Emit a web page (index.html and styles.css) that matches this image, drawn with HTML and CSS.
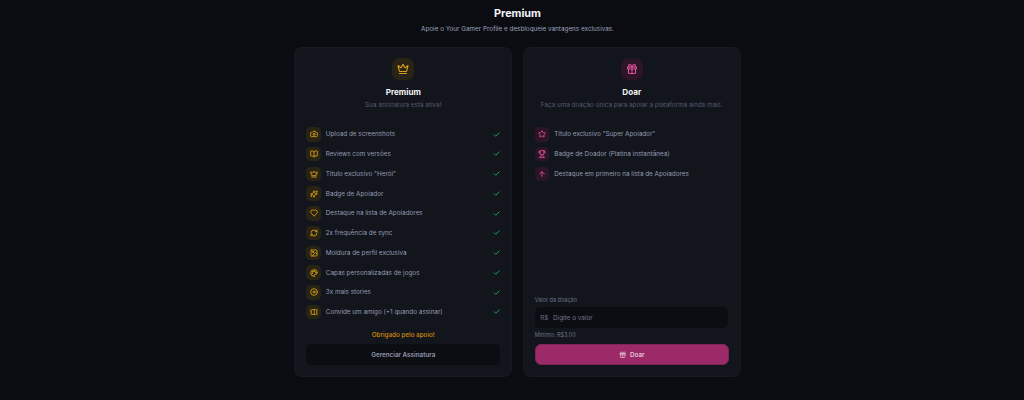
FILE: index.html
```html
<!DOCTYPE html>
<html lang="pt-BR">
<head>
  <meta charset="UTF-8">
  <title>Premium</title>
  <link rel="stylesheet" href="styles.css">
</head>
<body>
  <svg class="sprite" aria-hidden="true">
    <symbol id="i-crown" viewBox="0 0 24 24"><path d="M11.562 3.266a.5.5 0 0 1 .876 0L15.39 8.87a1 1 0 0 0 1.516.294L21.183 5.5a.5.5 0 0 1 .798.519l-2.834 10.246a1 1 0 0 1-.956.734H5.81a1 1 0 0 1-.957-.734L2.02 6.02a.5.5 0 0 1 .798-.519l4.276 3.664a1 1 0 0 0 1.516-.294z"/><path d="M5 21h14"/></symbol>
    <symbol id="i-camera" viewBox="0 0 24 24"><path d="M14.5 4h-5L7 7H4a2 2 0 0 0-2 2v9a2 2 0 0 0 2 2h16a2 2 0 0 0 2-2V9a2 2 0 0 0-2-2h-3l-2.5-3z"/><circle cx="12" cy="13" r="3"/></symbol>
    <symbol id="i-book" viewBox="0 0 24 24"><path d="M12 7v14"/><path d="M3 18a1 1 0 0 1-1-1V4a1 1 0 0 1 1-1h5a4 4 0 0 1 4 4 4 4 0 0 1 4-4h5a1 1 0 0 1 1 1v13a1 1 0 0 1-1 1h-6a3 3 0 0 0-3 3 3 3 0 0 0-3-3z"/></symbol>
    <symbol id="i-sparkles" viewBox="0 0 24 24"><path d="M9.937 15.5A2 2 0 0 0 8.5 14.063l-6.135-1.582a.5.5 0 0 1 0-.962L8.5 9.936A2 2 0 0 0 9.937 8.5l1.582-6.135a.5.5 0 0 1 .963 0L14.063 8.5A2 2 0 0 0 15.5 9.937l6.135 1.581a.5.5 0 0 1 0 .964L15.5 14.063a2 2 0 0 0-1.437 1.437l-1.582 6.135a.5.5 0 0 1-.963 0z"/><path d="M20 3v4"/><path d="M22 5h-4"/><path d="M4 17v2"/><path d="M5 18H3"/></symbol>
    <symbol id="i-heart" viewBox="0 0 24 24"><path d="M19 14c1.49-1.46 3-3.21 3-5.5A5.5 5.5 0 0 0 16.5 3c-1.76 0-3 .5-4.5 2-1.5-1.5-2.74-2-4.5-2A5.5 5.5 0 0 0 2 8.5c0 2.3 1.5 4.05 3 5.5l7 7Z"/></symbol>
    <symbol id="i-refresh" viewBox="0 0 24 24"><path d="M3 12a9 9 0 0 1 9-9 9.75 9.75 0 0 1 6.74 2.74L21 8"/><path d="M21 3v5h-5"/><path d="M21 12a9 9 0 0 1-9 9 9.75 9.75 0 0 1-6.74-2.74L3 16"/><path d="M8 16H3v5"/></symbol>
    <symbol id="i-image" viewBox="0 0 24 24"><rect x="3" y="3" width="18" height="18" rx="2"/><circle cx="9" cy="9" r="2"/><path d="m21 15-3.086-3.086a2 2 0 0 0-2.828 0L6 21"/></symbol>
    <symbol id="i-palette" viewBox="0 0 24 24"><path d="M12 22a1 1 0 0 1 0-20 10 9 0 0 1 10 9 5 5 0 0 1-5 5h-2.25a1.75 1.75 0 0 0-1.4 2.8l.3.4a1.75 1.75 0 0 1-1.4 2.8z"/><circle cx="13.5" cy="6.5" r="1"/><circle cx="17.5" cy="10.5" r="1"/><circle cx="6.5" cy="12.5" r="1"/><circle cx="8.5" cy="7.5" r="1"/></symbol>
    <symbol id="i-dot" viewBox="0 0 24 24"><circle cx="12" cy="12" r="10"/><circle cx="12" cy="12" r="3"/></symbol>
    <symbol id="i-ticket" viewBox="0 0 24 24"><path d="M2 9a3 3 0 0 1 0 6v2a2 2 0 0 0 2 2h16a2 2 0 0 0 2-2v-2a3 3 0 0 1 0-6V7a2 2 0 0 0-2-2H4a2 2 0 0 0-2 2Z"/><path d="M13 5v2"/><path d="M13 17v2"/><path d="M13 11v2"/></symbol>
    <symbol id="i-star" viewBox="0 0 24 24"><path d="M11.525 2.295a.53.53 0 0 1 .95 0l2.31 4.679a2.123 2.123 0 0 0 1.595 1.16l5.166.756a.53.53 0 0 1 .294.904l-3.736 3.638a2.123 2.123 0 0 0-.611 1.878l.882 5.14a.53.53 0 0 1-.771.56l-4.618-2.428a2.122 2.122 0 0 0-1.973 0L6.396 21.01a.53.53 0 0 1-.77-.56l.881-5.139a2.122 2.122 0 0 0-.611-1.879L2.16 9.795a.53.53 0 0 1 .294-.906l5.165-.755a2.122 2.122 0 0 0 1.597-1.16z"/></symbol>
    <symbol id="i-trophy" viewBox="0 0 24 24"><path d="M6 9H4.5a2.5 2.5 0 0 1 0-5H6"/><path d="M18 9h1.5a2.5 2.5 0 0 0 0-5H18"/><path d="M4 22h16"/><path d="M10 14.66V17c0 .55-.47.98-.97 1.21C7.85 18.75 7 20.24 7 22"/><path d="M14 14.66V17c0 .55.47.98.97 1.21C16.15 18.75 17 20.24 17 22"/><path d="M18 2H6v7a6 6 0 0 0 12 0V2Z"/></symbol>
    <symbol id="i-arrow" viewBox="0 0 24 24"><path d="m5 12 7-7 7 7"/><path d="M12 19V5"/></symbol>
    <symbol id="i-gift" viewBox="0 0 24 24"><rect x="3" y="8" width="18" height="4" rx="1"/><path d="M12 8v13"/><path d="M19 12v7a2 2 0 0 1-2 2H7a2 2 0 0 1-2-2v-7"/><path d="M7.5 8a2.5 2.5 0 0 1 0-5A4.8 8 0 0 1 12 8a4.8 8 0 0 1 4.5-5 2.5 2.5 0 0 1 0 5"/></symbol>
    <symbol id="i-check" viewBox="0 0 24 24"><path d="M20 6 9 17l-5-5"/></symbol>
  </svg>

  <main class="page">
    <h1 class="page-title">Premium</h1>
    <p class="page-sub">Apoie o Your Gamer Profile e desbloqueie vantagens exclusivas.</p>

    <div class="plans">
      <section class="card card-gold">
        <header class="card-head">
          <div class="head-icon"><svg class="ico"><use href="#i-crown"/></svg></div>
          <h2>Premium</h2>
          <p>Sua assinatura está ativa!</p>
        </header>
        <ul class="perks">
          <li><span class="perk-icon"><svg class="ico"><use href="#i-camera"/></svg></span><span class="perk-text">Upload de screenshots</span><svg class="ico tick"><use href="#i-check"/></svg></li>
          <li><span class="perk-icon"><svg class="ico"><use href="#i-book"/></svg></span><span class="perk-text">Reviews com versões</span><svg class="ico tick"><use href="#i-check"/></svg></li>
          <li><span class="perk-icon"><svg class="ico"><use href="#i-crown"/></svg></span><span class="perk-text">Título exclusivo "Herói"</span><svg class="ico tick"><use href="#i-check"/></svg></li>
          <li><span class="perk-icon"><svg class="ico"><use href="#i-sparkles"/></svg></span><span class="perk-text">Badge de Apoiador</span><svg class="ico tick"><use href="#i-check"/></svg></li>
          <li><span class="perk-icon"><svg class="ico"><use href="#i-heart"/></svg></span><span class="perk-text">Destaque na lista de Apoiadores</span><svg class="ico tick"><use href="#i-check"/></svg></li>
          <li><span class="perk-icon"><svg class="ico"><use href="#i-refresh"/></svg></span><span class="perk-text">2x frequência de sync</span><svg class="ico tick"><use href="#i-check"/></svg></li>
          <li><span class="perk-icon"><svg class="ico"><use href="#i-image"/></svg></span><span class="perk-text">Moldura de perfil exclusiva</span><svg class="ico tick"><use href="#i-check"/></svg></li>
          <li><span class="perk-icon"><svg class="ico"><use href="#i-palette"/></svg></span><span class="perk-text">Capas personalizadas de jogos</span><svg class="ico tick"><use href="#i-check"/></svg></li>
          <li><span class="perk-icon"><svg class="ico"><use href="#i-dot"/></svg></span><span class="perk-text">3x mais stories</span><svg class="ico tick"><use href="#i-check"/></svg></li>
          <li><span class="perk-icon"><svg class="ico"><use href="#i-ticket"/></svg></span><span class="perk-text">Convide um amigo (+1 quando assinar)</span><svg class="ico tick"><use href="#i-check"/></svg></li>
        </ul>
        <div class="card-foot">
          <p class="thanks">Obrigado pelo apoio!</p>
          <button class="btn-manage">Gerenciar Assinatura</button>
        </div>
      </section>

      <section class="card card-pink">
        <header class="card-head">
          <div class="head-icon"><svg class="ico"><use href="#i-gift"/></svg></div>
          <h2>Doar</h2>
          <p>Faça uma doação única para apoiar a plataforma ainda mais.</p>
        </header>
        <ul class="perks">
          <li><span class="perk-icon"><svg class="ico"><use href="#i-star"/></svg></span><span class="perk-text">Título exclusivo "Super Apoiador"</span></li>
          <li><span class="perk-icon"><svg class="ico"><use href="#i-trophy"/></svg></span><span class="perk-text">Badge de Doador (Platina instantânea)</span></li>
          <li><span class="perk-icon"><svg class="ico"><use href="#i-arrow"/></svg></span><span class="perk-text">Destaque em primeiro na lista de Apoiadores</span></li>
        </ul>
        <div class="card-foot">
          <label class="field-label" for="valor">Valor da doação</label>
          <div class="field">
            <span class="prefix">R$</span>
            <input id="valor" type="text" placeholder="Digite o valor">
          </div>
          <p class="field-hint">Mínimo: R$3,00</p>
          <button class="btn-donate"><svg class="ico"><use href="#i-gift"/></svg>Doar</button>
        </div>
      </section>
    </div>
  </main>
</body>
</html>
```

FILE: styles.css
```css
* { box-sizing: border-box; margin: 0; padding: 0; }
body {
  font-family: 'Inter', 'Liberation Sans', sans-serif;
  background: #0a0c11;
  color: #9ca3af;
  height: 400px;
  overflow: hidden;
}
.sprite { display: none; }
.ico {
  fill: none;
  stroke: currentColor;
  stroke-width: 2.6;
  stroke-linecap: round;
  stroke-linejoin: round;
}
.page {
  display: flex;
  flex-direction: column;
  align-items: center;
  padding: 6px 0 0 11px;
}
.page-title {
  font-size: 10.8px;
  line-height: 16px;
  font-weight: 700;
  color: #f3f4f6;
}
.page-sub {
  margin-top: 1.5px;
  font-size: 6.35px;
  line-height: 10px;
  color: #9aa3ba;
}
.plans {
  display: flex;
  gap: 10.5px;
  margin-top: 13.5px;
}
.card {
  width: 218px;
  height: 330px;
  background: #12151c;
  border: 1px solid #151922;
  border-radius: 8px;
  padding: 10px 11px 11px;
  display: flex;
  flex-direction: column;
}
.card-head {
  text-align: center;
  padding-bottom: 9px;
  border-bottom: 1px solid #141820;
}
.head-icon {
  width: 22px;
  height: 22px;
  margin: 0 auto;
  border-radius: 7px;
  display: flex;
  align-items: center;
  justify-content: center;
}
.head-icon .ico { width: 12px; height: 12px; stroke-width: 2.2; }
.card-head h2 {
  margin-top: 7px;
  font-size: 8.1px;
  line-height: 11px;
  font-weight: 700;
  color: #f3f4f6;
}
.card-head p {
  margin-top: 3px;
  font-size: 6.35px;
  line-height: 9px;
  color: #525b6e;
}
.perks {
  list-style: none;
  margin-top: 7px;
  display: flex;
  flex-direction: column;
  gap: 5.25px;
}
.perks li {
  display: flex;
  align-items: center;
  gap: 5px;
  height: 14.5px;
}
.perk-icon {
  width: 14.5px;
  height: 14.5px;
  border-radius: 4.5px;
  display: flex;
  align-items: center;
  justify-content: center;
  flex-shrink: 0;
}
.perk-icon .ico { width: 8px; height: 8px; }
.perk-text {
  flex: 1;
  font-size: 6.35px;
  color: #959db2;
}
.tick { width: 7.5px; height: 7.5px; color: #22c55e; }

.card-gold .head-icon, .card-gold .perk-icon { background: #292316; color: #d9a11a; }
.card-pink .head-icon, .card-pink .perk-icon { background: #2c1526; color: #e0509b; }

.card-foot {
  margin-top: auto;
  display: flex;
  flex-direction: column;
}
.thanks {
  text-align: center;
  font-size: 6.3px;
  line-height: 10px;
  font-weight: 500;
  color: #d98e0b;
  margin-bottom: 4px;
}
.btn-manage {
  height: 21px;
  border: none;
  border-radius: 5px;
  background: #0b0d12;
  color: #8f97ac;
  font: 600 6.3px 'Inter', sans-serif;
}
.field-label {
  font-size: 5.5px;
  line-height: 8px;
  color: #6b7385;
  margin-bottom: 3px;
}
.field {
  height: 21px;
  margin: 0 .5px;
  border-radius: 5px;
  background: #0b0d12;
  display: flex;
  align-items: center;
  gap: 4.5px;
  padding: 0 5px;
  font-size: 6.4px;
  color: #6b7385;
}
.field input {
  flex: 1;
  min-width: 0;
  background: none;
  border: none;
  outline: none;
  font: 400 6.4px 'Inter', sans-serif;
  color: #9ca3af;
}
.field input::placeholder { color: #6b7385; opacity: 1; }
.field-hint {
  font-size: 5.5px;
  line-height: 8px;
  color: #6b7385;
  margin-top: 3px;
  margin-bottom: 5px;
}
.btn-donate {
  height: 21px;
  border: 1px solid #7f2659;
  border-radius: 6px;
  background: #9d2a68;
  color: #e5c6d8;
  font: 600 6.3px 'Inter', sans-serif;
  display: flex;
  align-items: center;
  justify-content: center;
  gap: 3.5px;
}
.btn-donate .ico { width: 7.5px; height: 7.5px; stroke-width: 2.2; }
```
